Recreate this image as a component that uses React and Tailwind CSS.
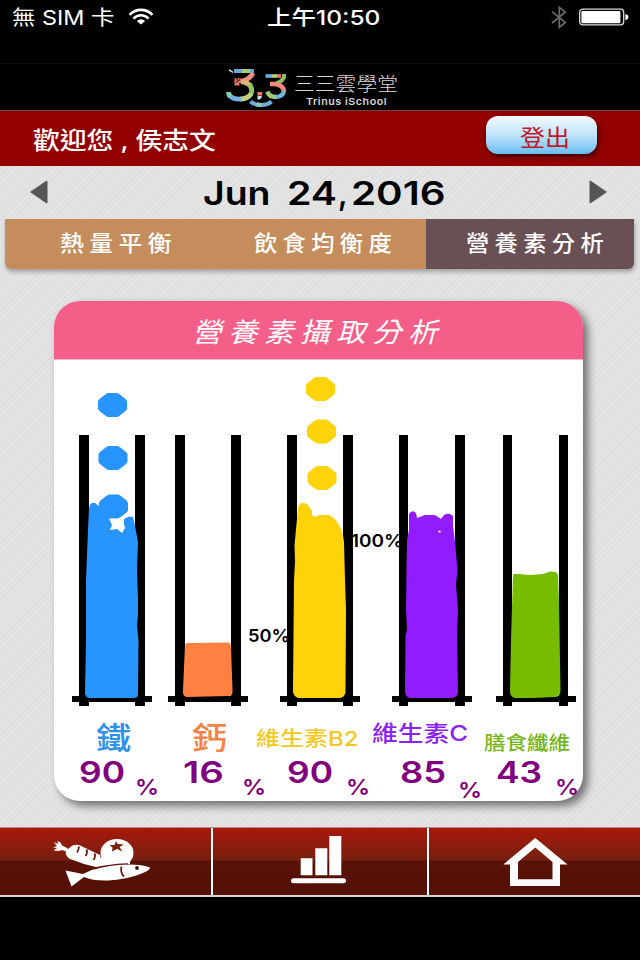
import { useLayoutEffect, useRef, useState } from "react";

/* Text stretched horizontally so that it fills exactly `w` pixels. */
function Fit({ w, className = "", children }) {
  const ref = useRef(null);
  const [scale, setScale] = useState(1);
  useLayoutEffect(() => {
    const width = ref.current.offsetWidth;
    if (width) setScale(w / width);
  }, [w, children]);
  return (
    <div className={"shrink-0 leading-none whitespace-pre " + className} style={{ width: w }}>
      <span ref={ref} className="inline-block origin-left" style={{ transform: `scaleX(${scale})` }}>
        {children}
      </span>
    </div>
  );
}

function StatusBar() {
  return (
    <div className="flex h-[63px] items-start bg-black text-xl text-white">
      <Fit w={103} className="mt-2 ml-3">無 SIM 卡</Fit>
      <svg className="mt-2 ml-[13px] h-[18px] w-[26px]" viewBox="0 0 26 18" fill="none" stroke="#fff" strokeWidth="2.6">
        <path d="M1.6 6.8C8 .2 18 .2 24.4 6.8" />
        <path d="M5.4 10.6C9.8 6.2 16.2 6.2 20.6 10.6" />
        <path d="M13 16.6L8.8 12.9Q13 9.7 17.2 12.9Z" fill="#fff" stroke="none" />
      </svg>
      <Fit w={114} className="mt-2 ml-[113px] font-medium">上午10:50</Fit>
      <svg className="mt-[6px] ml-[170px] h-[23px] w-4" viewBox="0 0 16 23" fill="none" stroke="#6b6b6b" strokeWidth="1.7">
        <path d="M1 5.6L14.2 16.4L8.3 21.4V1.4L14.2 6.2L1 17" />
      </svg>
      <svg className="mt-2 ml-3 h-[18px] w-[50px]" viewBox="0 0 50 18">
        <rect x=".7" y="1.2" width="44" height="15.6" rx="3" fill="none" stroke="#ddd" strokeWidth="1.3" />
        <rect x="2.4" y="3" width="39" height="12.2" rx="1" fill="#fff" />
        <path d="M46.4 6v6.2q3-.6 3-3.1t-3-3.1z" fill="#fff" />
      </svg>
    </div>
  );
}

function Logo() {
  return (
    <div className="flex h-[47px] items-start border-t border-[#0d0d0d] bg-black">
      <svg className="mt-[3px] ml-[224px] h-[43px] w-16" viewBox="224 67 64 43" fill="none" strokeWidth="4.8">
        <path d="M229 69L233 71.500V73L229 71Z" fill="#c5e8ea" />
        <path d="M234 71H242" stroke="#6fa5d8" strokeWidth="4" />
        <path d="M242 71H250" stroke="#a5cf74" strokeWidth="4" />
        <path d="M250 71H254" stroke="#62a9d4" strokeWidth="4" />
        <path d="M253 73Q250 79.500 242 81" stroke="#ef8d7d" />
        <path d="M234.500 80.500H241" stroke="#ef7666" strokeWidth="4.500" />
        <path d="M237 81V85.500" stroke="#ef7666" />
        <path d="M241 81.500Q248 82.500 251 86.500" stroke="#d9b57e" />
        <path d="M249.500 84.500Q253.500 90 250.500 95" stroke="#8fc463" />
        <path d="M251 94Q247.500 99 240 99" stroke="#c0cc80" />
        <path d="M241 99.200Q232 99.500 229 94.500" stroke="#74afe0" />
        <path d="M230 96.500Q228.600 94.500 228.300 92" stroke="#86cbb5" />
        <path d="M237 77.500v3M240 79.500l-4 3" stroke="#000" strokeWidth="1" />
        <path d="M265.500 76H272" stroke="#6faee0" strokeWidth="3.600" />
        <path d="M272 76H277" stroke="#b5cf89" strokeWidth="3.600" />
        <path d="M277 76H281" stroke="#ee7768" strokeWidth="3.600" />
        <path d="M284 74V77Q282.500 81.500 276 83.500" stroke="#8dbe63" strokeWidth="4" />
        <path d="M270 84H275Q283.500 85 284 91.500" stroke="#ef8a7a" strokeWidth="4.400" />
        <path d="M284 91Q283 97 275 97" stroke="#72b5db" strokeWidth="4.400" />
        <path d="M276 97Q269 97 267.300 91.500" stroke="#a2c973" strokeWidth="4.400" />
        <path d="M259.800 92V95.600" stroke="#ef7768" />
        <path d="M257.500 96H262Q261.500 99.500 257.500 99.800Z" fill="#c2e4ea" />
        <path d="M250.500 101.500Q254 105 261 105Q268 105 271.500 101.500" stroke="#72add9" strokeWidth="4" />
        <path d="M257 104.500Q259 105 262 105" stroke="#8ccbb0" strokeWidth="4" />
      </svg>
      <div className="mt-[11px] ml-[6px] flex flex-col text-[#d6d6d6]">
        <Fit w={104} className="text-[19px] font-light">三三雲學堂</Fit>
        <Fit w={81} className="mt-[3px] ml-3 text-[9.500px] font-semibold tracking-wider">Trinus iSchool</Fit>
      </div>
    </div>
  );
}

function WelcomeBar() {
  return (
    <div className="flex h-14 items-start border-t border-[#6d4444] bg-[#920000] text-white">
      <Fit w={183} className="mt-[18px] ml-[33px] text-2xl font-medium">歡迎您 , 侯志文</Fit>
      <button className="mt-[5px] ml-[270px] flex h-[38px] w-[111px] items-start rounded-xl bg-linear-to-b from-[#f2faff] via-[#c0e4fa] to-[#67bdf0] pt-[11px] pl-8 text-[23px] text-[#c01828] shadow-[1px_3px_4px_rgba(0,0,0,.55)]">
        <Fit w={50}>登出</Fit>
      </button>
    </div>
  );
}

function DateRow() {
  return (
    <div className="flex h-[53px] items-start">
      <svg className="mt-[14px] ml-[29px] h-6 w-[19px]" viewBox="0 0 19 24"><path d="M1 12L17 1Q18.500 0 18.500 2V22Q18.500 24 17 23Z" fill="#555" /></svg>
      <div className="ml-[155px] flex w-[243px] items-start pt-[11px] text-[33px] font-semibold text-black">
        <Fit w={68}>Jun</Fit>
        <Fit w={50} className="ml-4">24</Fit>
        <Fit w={10} className="ml-px">,</Fit>
        <Fit w={94} className="ml-[3px]">2016</Fit>
      </div>
      <svg className="mt-[14px] ml-[143px] h-6 w-[19px]" viewBox="0 0 19 24"><path d="M18 12L2 1Q.5 0 .5 2V22Q.5 24 2 23Z" fill="#555" /></svg>
    </div>
  );
}

function Tabs() {
  return (
    <div className="mx-[5px] flex h-[50px] w-[629px] overflow-visible rounded-b-md text-[22px] text-white shadow-[1px_3px_4px_rgba(0,0,0,.28)]">
      <div className="w-[213px] rounded-bl-md bg-[#c48d5b] pt-[13px] pl-[55px]"><Fit w={117} className="font-medium tracking-[5px]">熱量平衡</Fit></div>
      <div className="w-[208px] bg-[#c48d5b] pt-[13px] pl-[36px]"><Fit w={143} className="font-medium tracking-[5px]">飲食均衡度</Fit></div>
      <div className="w-[208px] rounded-br-md bg-[#695055] pt-[13px] pl-10"><Fit w={143} className="font-medium tracking-[5px]">營養素分析</Fit></div>
    </div>
  );
}

const TUBES = [79, 175, 287, 399, 503];

function Bubble({ x, y }) {
  return <path transform={`translate(${x} ${y})`} d="M-5-12H5L8-10L13-6L14.500-4V4L13 6L8 10L5 12H-5L-8 10L-13 6L-14.500 4V-4L-13-6L-8-10Z" />;
}

function TubeChart() {
  return (
    <svg className="block h-[350px] w-[529px]" viewBox="54 360 529 350">
      <g fill="#000" fontFamily="Inter, sans-serif" fontSize="17.500" fontWeight="600">
        <text x="248" y="641.5" textLength="42" lengthAdjust="spacingAndGlyphs">50%</text>
        <text x="351" y="547" textLength="52" lengthAdjust="spacingAndGlyphs">100%</text>
      </g>
      {TUBES.map((x) => (
        <g key={x} fill="#000">
          <rect x={x} y="435" width={x > 390 ? 9 : 10} height="271" />
          <rect x={x + 56} y="435" width={x === 503 ? 9 : 10} height="271" />
          <rect x={x - 7} y="696" width="80" height="6" />
        </g>
      ))}
      <g fill="#2894ff">
        <Bubble x={112.500} y={405} />
        <Bubble x={113} y={458} />
        <Bubble x={113.500} y={506.500} />
        <path d="M89 508Q90 502 95 503L99 506L109 518L117 520L124 525L124 519Q125 516 133 517L135 526L138 542L137 570L138 600L138 615L137 625L138.500 640L138 694Q138 698 134 698H89Q85 697 85 693L86 640L86 580L88 530Z" />
        <path d="M109 518.500L117 519L124 515.500L128 514L128 517L124 519L123.500 523L125 528L122 533L117 529L110 530L112 525Z" fill="#fff" />
      </g>
      <path d="M185 645Q186 642 190 643L227 642.500Q231 642 231 647L232.500 690Q233 697 228 696L187 697Q182 696 183 690Z" fill="#ff8040" />
      <g fill="#ffd30a">
        <Bubble x={320.500} y={389} />
        <Bubble x={321.500} y={431.500} />
        <Bubble x={322} y={478} />
        <path d="M298 508Q299 503 303 503Q308 503 309 507L312 511V515L315 517L319 515H329Q335 518 339 525Q343 532 344 542L345 580L346 610L345.500 692Q345 697 340 698H298Q293 696 293 691L294 580L295 562L294.500 545Z" />
      </g>
      <path d="M409 514Q412 509 416 513L417 518L425 515H435L441 519L444 515Q449 512 453 516V525L455 542L457.500 570L456 585L458 610L457 635L458 692Q458 697 452 698H410Q405 697 405 691L405.500 635L407 630L406 610L406.500 570L407 540L409 530Z" fill="#921bff" />
      <path d="M438 532l1-1.500h1.500v2h-2z" fill="#fff" />
      <path d="M513 575Q514 573 519 574L530 575L543 574L550 571.500L556 572L558 575L559 600L560.500 691Q560 697 555 697L533 698H515Q510 697 510 691L511 640Z" fill="#76bd00" />
    </svg>
  );
}

function Nutrient({ className, labelClass, label, labelW, valueClass, value, valueW, unitClass }) {
  return (
    <div className={"flex shrink-0 flex-col " + className}>
      <div className="h-[35px]"><Fit w={labelW} className={labelClass}>{label}</Fit></div>
      <div className="flex items-start text-[#800080]">
        <Fit w={valueW} className={"text-[30px] font-semibold " + valueClass}>{value}</Fit>
        <Fit w={24} className={"text-[22px] font-semibold " + unitClass}>%</Fit>
      </div>
    </div>
  );
}

function Card() {
  return (
    <div className="mt-8 ml-[54px] h-[500px] w-[529px] overflow-visible rounded-[26px] bg-white shadow-[5px_5px_9px_0px_rgba(0,0,0,.5)]">
      <div className="h-[59px] rounded-t-[26px] border-b border-[#f9b5c9] bg-[#f45f89] pt-[18px] pl-[138px] text-[27px] text-white italic">
        <Fit w={252} className="tracking-[6px]">營養素攝取分析</Fit>
      </div>
      <TubeChart />
      <div className="mt-[12px] flex pl-[18px]">
        <Nutrient className="w-24" label="鐵" labelW={35} labelClass="ml-6 text-[31px] font-medium text-[#2f92ea]" value="90" valueW={46} valueClass="ml-[7px]" unitClass="mt-[19px] ml-[10px]" />
        <Nutrient className="w-[88px]" label="鈣" labelW={35} labelClass="ml-6 text-[31px] font-medium text-[#f48347]" value="16" valueW={41} valueClass="ml-[15px]" unitClass="mt-[19px] ml-[18px]" />
        <Nutrient className="w-[116px]" label="維生素B2" labelW={102} labelClass="mt-[7px] text-xl font-medium text-[#f5c71d]" value="90" valueW={46} valueClass="ml-[31px]" unitClass="mt-[19px] ml-[13px]" />
        <Nutrient className="w-28" label="維生素C" labelW={96} labelClass="text-[22px] font-medium text-[#8a22f2]" value="85" valueW={46} valueClass="ml-7" unitClass="mt-[22px] ml-[12px]" />
        <Nutrient className="w-[99px]" label="膳食纖維" labelW={86} labelClass="mt-[12px] text-[19px] font-medium text-[#76b51a]" value="43" valueW={46} valueClass="ml-3" unitClass="mt-[19px] ml-[13px]" />
      </div>
    </div>
  );
}

function BottomNav() {
  const cell = "flex h-full items-start bg-[linear-gradient(180deg,#a8180a_0%,#75200f_48%,#5a1208_49%,#521006_100%)]";
  return (
    <div className="mt-[26px] flex h-[70px] gap-0.5 border-t border-b-2 border-t-[#b88] border-b-[#ddd4d2] bg-white">
      <div className={cell + " w-[211px]"}>
        <svg className="mt-[8px] ml-[50px] h-[52px] w-[104px]" viewBox="50 836 104 52" fill="#fff">
          <path d="M53.500 842L58 844L57.500 841L60.500 842.500L62 845.500L66 847.500L68.500 849Q72 844 79 845L100 855L102 866L96 867L84 864L69 858.500Q65 855 66 851.500L62 850L59 851L53.500 850.500L57 848L53 847.500L57 846Z" />
          <ellipse cx="117" cy="853" rx="16.500" ry="14" />
          <path d="M100 858H130V864L116 865L100 866Z" />
          <path d="M83 874Q102 864 124 864.500Q142 864 150 867.500Q150 870 143 873Q126 880 108 880.500Q93 881 84 877L71.500 886.500L65.500 870.500Z" />
          <path d="M79 846.500q-.500 4-2 6M86.500 849.500q1.500 3-1 6.500M94.500 853.500q1.500 3-1 6.500M121.500 866.500q-1.500 6 2.500 10" fill="none" stroke="#6b1b10" strokeWidth="1.800" />
          <path d="M116 841l1.500 3 6.500.5-4.500 2.500 3 4.500-5.500-2.500-5 2.500.5-4-3-2.500h5z" fill="#79200f" />
          <circle cx="137" cy="868" r="1.900" fill="#42130d" />
          <path d="M94 869Q106 864.500 128 863.800" fill="none" stroke="#5d150b" strokeWidth="1.300" />
        </svg>
      </div>
      <div className={cell + " w-[214px]"}>
        <svg className="mt-[7px] ml-[77px] h-[50px] w-[58px]" viewBox="290 835 58 50" fill="#fff">
          <path d="M300.700 858.300h11.800v17h-11.800zM315.300 848.300h12v27h-12zM329.300 836h12v39.300h-12z" />
          <rect x="291" y="878.300" width="55" height="5" rx="2.500" />
        </svg>
      </div>
      <div className={cell + " w-[211px]"}>
        <svg className="mt-[9px] ml-[73px] h-[50px] w-[66px]" viewBox="502 837 66 50" fill="#fff" fillRule="evenodd">
          <path d="M535.300 838L567.500 864.500H560V886H510V864.500H503.300ZM535.300 847.500L518 862V879.300H552.500V862Z" />
        </svg>
      </div>
    </div>
  );
}

export default function App() {
  return (
    <div className="h-[960px] w-[640px] overflow-hidden bg-black font-['Inter','Noto_Sans_CJK_TC',sans-serif]">
      <StatusBar />
      <Logo />
      <WelcomeBar />
      <div className="bg-[#e3e2e2] bg-[repeating-linear-gradient(135deg,#e5e4e4_0px,#e5e4e4_2px,#dcdbdb_3px,#e5e4e4_4px)]">
        <DateRow />
        <Tabs />
        <Card />
        <BottomNav />
      </div>
    </div>
  );
}
